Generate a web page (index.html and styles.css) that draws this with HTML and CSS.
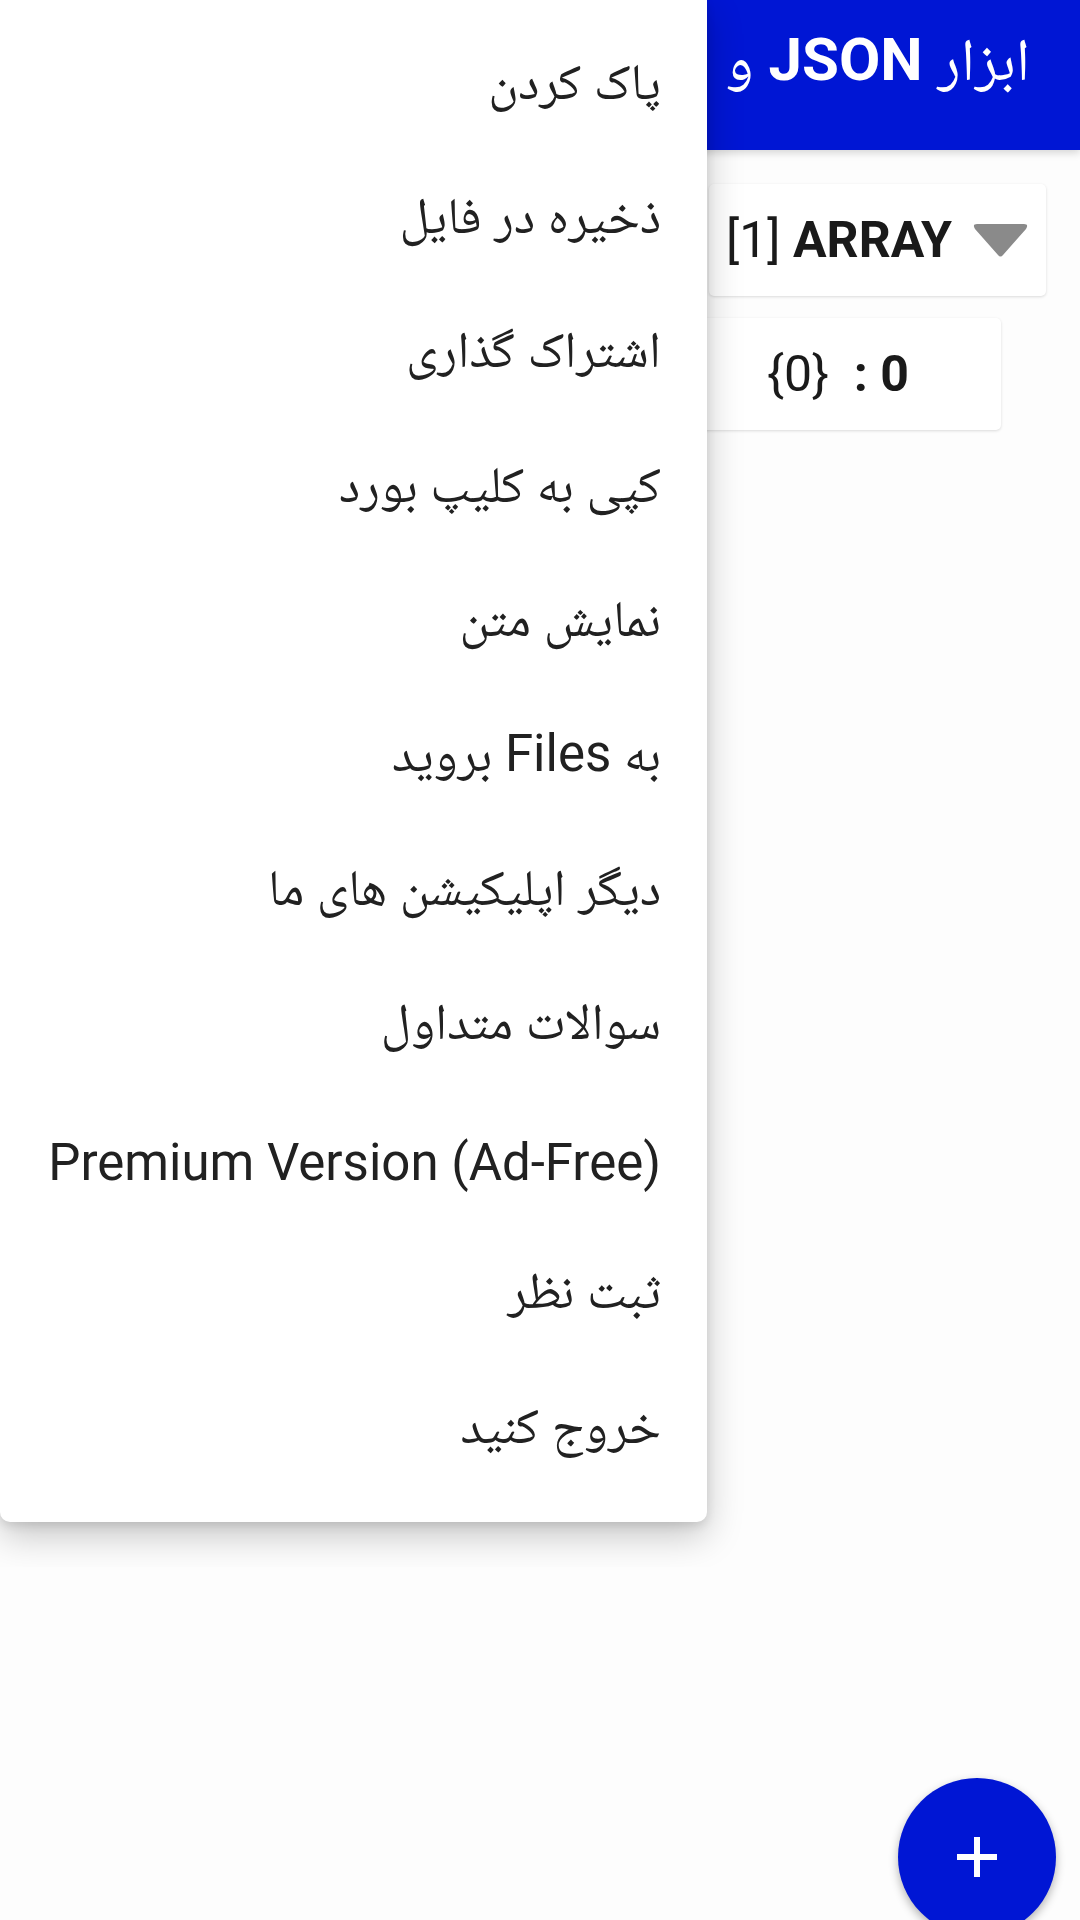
FILE: index.html
```html
<!DOCTYPE html>
<html lang="fa">
<head>
<meta charset="utf-8">
<title>JSON</title>
<link rel="stylesheet" href="styles.css">
</head>
<body>
<div class="app">
  <header class="toolbar">
    <h1 class="title" dir="rtl">ابزار <b class="title-strong">JSON</b> و</h1>
  </header>
  <main class="tree">
    <div class="node node-root">
      <span class="node-label">[1] <b>ARRAY</b></span>
      <svg class="caret" viewBox="0 0 57 34" width="57" height="34"><path d="M5 1 H52 Q57 1 54 6 L31 32 Q28.5 35 26 32 L3 6 Q0 1 5 1 Z" fill="#8a8a8a"/></svg>
    </div>
    <div class="node node-child"><span class="node-label">{0}  <b>: 0</b></span></div>
  </main>
  <button class="fab" aria-label="add">
    <svg viewBox="0 0 40 40" width="40" height="40"><path d="M20 0 V40 M0 20 H40" stroke="#fff" stroke-width="6"/></svg>
  </button>
  <div class="popup">
    <ul class="menu" dir="rtl">
      <li class="menu-item">پاک کردن</li>
      <li class="menu-item">ذخیره در فایل</li>
      <li class="menu-item">اشتراک گذاری</li>
      <li class="menu-item">کپی به کلیپ بورد</li>
      <li class="menu-item">نمایش متن</li>
      <li class="menu-item">به Files بروید</li>
      <li class="menu-item">دیگر اپلیکیشن های ما</li>
      <li class="menu-item">سوالات متداول</li>
      <li class="menu-item">Premium Version (Ad-Free)</li>
      <li class="menu-item">ثبت نظر</li>
      <li class="menu-item">خروج کنید</li>
    </ul>
  </div>
</div>
</body>
</html>
```
FILE: styles.css
```css
html, body {
  margin: 0;
  padding: 0;
}
body {
  width: 1080px;
  height: 1920px;
  overflow: hidden;
  background: #fdfdfd;
  font-family: Roboto, "Noto Naskh Arabic", "Noto Sans Arabic", "DejaVu Sans", sans-serif;
  color: #212121;
}
.app {
  position: relative;
  width: 1080px;
  height: 1920px;
  display: flex;
  flex-direction: column;
}
.toolbar {
  flex: 0 0 150px;
  height: 150px;
  background: #0016d4;
  box-shadow: 0 3px 8px rgba(0, 0, 0, 0.16);
  display: flex;
  justify-content: flex-end;
  align-items: flex-start;
  padding-right: 50px;
  position: relative;
  z-index: 1;
}
.title {
  margin: 0;
  padding-top: 22px;
  font-size: 60px;
  line-height: 76px;
  font-weight: 400;
  color: #ffffff;
  white-space: nowrap;
}
.title-strong {
  font-weight: 700;
}
.tree {
  display: flex;
  flex-direction: column;
  align-items: flex-end;
  padding-top: 34px;
  gap: 22px;
}
.node {
  background: #ffffff;
  border-radius: 5px;
  box-shadow: 0 1px 3px rgba(0, 0, 0, 0.14);
  display: flex;
  align-items: center;
  font-size: 50px;
  color: #1a1a1a;
  white-space: pre;
}
.node b {
  font-weight: 700;
}
.node-root {
  height: 112px;
  margin-right: 34px;
  padding: 0 17px;
  gap: 20px;
}
.caret {
  display: block;
}
.node-child {
  height: 112px;
  margin-right: 79px;
  padding: 0 92px;
}
.fab {
  position: absolute;
  left: 898px;
  top: 1778px;
  width: 158px;
  height: 158px;
  border: none;
  border-radius: 50%;
  background: #0016d4;
  box-shadow: 0 4px 10px rgba(0, 0, 0, 0.3);
  display: flex;
  align-items: center;
  justify-content: center;
  padding: 0;
}
.fab svg {
  display: block;
}
.popup {
  position: absolute;
  left: 0;
  top: 0;
  width: 790px;
  height: 1567px;
  overflow: hidden;
  z-index: 5;
}
.menu {
  list-style: none;
  margin: 0;
  width: 707px;
  box-sizing: border-box;
  padding: 20px 46px 24px 0;
  background: #ffffff;
  border-radius: 0 0 10px 10px;
  box-shadow: 0 14px 36px rgba(0, 0, 0, 0.22), 0 4px 10px rgba(0, 0, 0, 0.1);
}
.menu-item {
  height: 134.4px;
  display: flex;
  align-items: center;
  font-size: 51px;
  color: #212121;
  white-space: nowrap;
}
```
